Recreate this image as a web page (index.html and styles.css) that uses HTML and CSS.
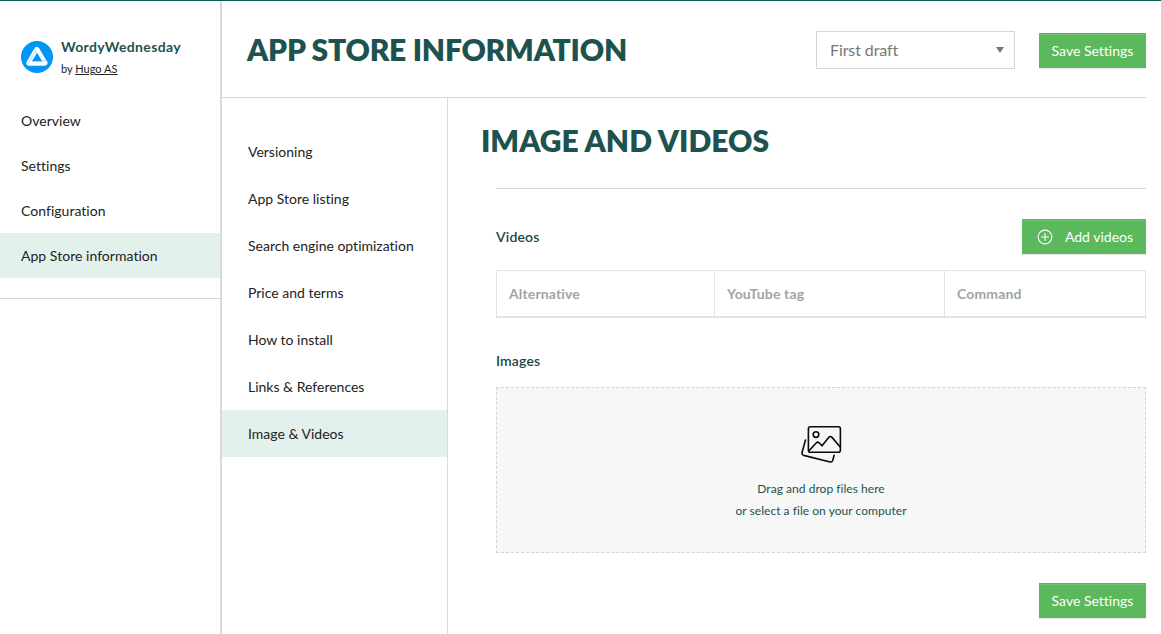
FILE: index.html
```html
<!DOCTYPE html>
<html lang="en">
<head>
<meta charset="utf-8">
<title>App Store information</title>
<link rel="stylesheet" href="styles.css">
</head>
<body>
<div class="app">
  <aside class="sidebar">
    <div class="profile">
      <svg class="logo" viewBox="0 0 32 32">
        <circle cx="16" cy="16" r="16" fill="#0095f6"/>
        <path d="M15.8 8.6 L23.8 22 H8 Z" fill="none" stroke="#fff" stroke-width="5.4" stroke-linejoin="round"/>
        <path d="M13.2 8.2 L21.4 21.4 M25.2 19.8 H11 M7.2 22.5 L14.2 10.6" fill="none" stroke="#8fcffa" stroke-width=".8"/>
        <path d="M16 11.8 L21 20.2 H11 Z" fill="#0095f6"/>
      </svg>
      <div>
        <div class="app-name">WordyWednesday</div>
        <div class="author">by <a class="author-link">Hugo AS</a></div>
      </div>
    </div>
    <nav class="main-nav">
      <a class="main-item">Overview</a>
      <a class="main-item">Settings</a>
      <a class="main-item">Configuration</a>
      <a class="main-item active">App Store information</a>
    </nav>
  </aside>
  <main class="main">
    <header class="header">
      <h1 class="title page-title">APP STORE INFORMATION</h1>
      <div class="select"><span>First draft</span><svg class="caret" viewBox="0 0 8 6"><path d="M0 0H8L4 6Z" fill="#777"/></svg></div>
      <button class="btn">Save Settings</button>
    </header>
    <div class="body">
      <nav class="sub-nav">
        <a class="sub-item">Versioning</a>
        <a class="sub-item">App Store listing</a>
        <a class="sub-item">Search engine optimization</a>
        <a class="sub-item">Price and terms</a>
        <a class="sub-item">How to install</a>
        <a class="sub-item">Links &amp; References</a>
        <a class="sub-item active">Image &amp; Videos</a>
      </nav>
      <section class="content">
        <h2 class="title">IMAGE AND VIDEOS</h2>
        <div class="panel">
          <div class="row">
            <h3 class="label">Videos</h3>
            <button class="btn btn-add">
              <svg class="plus" viewBox="0 0 16 16" fill="none" stroke="#fff" stroke-width="1.1"><circle cx="8" cy="8" r="6.9"/><path d="M8 4V12M4 8H12"/></svg>
              Add videos
            </button>
          </div>
          <div class="table">
            <div class="cell">Alternative</div>
            <div class="cell">YouTube tag</div>
            <div class="cell">Command</div>
          </div>
          <h3 class="label images-label">Images</h3>
          <div class="dropzone">
            <svg class="pictures" viewBox="0 0 42 38" fill="none" stroke="#0b0b0b" stroke-width="1.6" stroke-linecap="round" stroke-linejoin="round">
              <rect x="8.4" y="1.8" width="32" height="25.4" rx="2"/>
              <circle cx="16" cy="9.6" r="2.8"/>
              <path d="M9.2 25.5L16.2 18Q17.7 16.2 19.3 18L22 20.8L28.7 12.4Q30.4 10.6 32 12.4L40.2 22"/>
              <path d="M5.5 15L2 27.7Q1.7 29.8 3.7 30.4L30.2 37Q32.1 37.3 32.7 35.5L34.1 30.3"/>
            </svg>
            <div>Drag and drop files here</div>
            <div>or select a file on your computer</div>
          </div>
          <div class="footer"><button class="btn">Save Settings</button></div>
        </div>
      </section>
    </div>
  </main>
</div>
</body>
</html>
```
FILE: styles.css
```css
* { box-sizing: border-box; }
body {
  margin: 0;
  font-family: Lato, "Liberation Sans", sans-serif;
  font-size: 14px;
  font-variant-ligatures: none;
  color: #222;
  background: #fff;
}
h1, h2, h3 { margin: 0; }
.app {
  display: flex;
  height: 634px;
  border-top: 1px solid #0f5a55;
  overflow: hidden;
}
.sidebar {
  flex: none;
  width: 222px;
  border-right: 2px solid #d9d9d9;
}
.profile {
  display: flex;
  gap: 8px;
  height: 97px;
  padding: 37px 0 0 21px;
}
.logo { width: 32px; height: 32px; margin-top: 3px; }
.app-name {
  font-weight: 700;
  line-height: 18px;
  letter-spacing: .35px;
  color: #1d524e;
}
.author { font-size: 11px; line-height: 16px; margin-top: 5px; }
.author-link { text-decoration: underline; }
.main-nav {
  display: flex;
  flex-direction: column;
  padding-bottom: 20px;
  border-bottom: 1px solid #d5d5d5;
}
.main-item {
  height: 45px;
  padding-left: 21px;
  line-height: 46px;
  letter-spacing: .03px;
}
.active { background: #e3f1ec; }
.main {
  flex: 1;
  min-width: 0;
  display: flex;
  flex-direction: column;
  padding-right: 15px;
}
.header {
  flex: none;
  display: flex;
  align-items: flex-start;
  height: 97px;
  padding: 30px 0 0 24px;
  border-bottom: 1px solid #d5d5d5;
}
.title {
  font-size: 30px;
  line-height: 36px;
  font-weight: 800;
  color: #1d524e;
  white-space: nowrap;
}
.page-title { margin-right: auto; padding-left: 1px; letter-spacing: -.25px; }
.select {
  display: flex;
  align-items: center;
  justify-content: space-between;
  width: 199px;
  height: 38px;
  margin-right: 24px;
  padding: 0 10px 1px 13px;
  border: 1px solid #d5d5d5;
  font-size: 16px;
  letter-spacing: -.1px;
  color: #777;
}
.caret { width: 8px; height: 6px; }
.btn {
  display: flex;
  align-items: center;
  justify-content: center;
  width: 107px;
  height: 35px;
  padding: 0;
  border: 0;
  background: #5cb85c;
  box-shadow: inset 0 1px 0 #55b355, inset 0 2px 0 #74c374, 0 1px 1px rgba(0,0,0,.09);
  color: #fff;
  font: 14px Lato, "Liberation Sans", sans-serif;
  font-variant-ligatures: none;
  white-space: nowrap;
}
.header .btn { margin-top: 2px; }
.body { flex: 1; display: flex; }
.sub-nav {
  flex: none;
  display: flex;
  flex-direction: column;
  width: 226px;
  padding-top: 30px;
  border-right: 1px solid #d9d9d9;
}
.sub-item {
  height: 47px;
  padding-left: 26px;
  line-height: 47px;
}
.content { flex: 1; min-width: 0; padding: 24px 0 0 33px; }
.panel {
  margin: 30px 0 0 15px;
  padding-top: 30px;
  border-top: 1px solid #d5d5d5;
}
.row { display: flex; justify-content: space-between; align-items: center; height: 35px; }
.label { font-size: 14px; line-height: 20px; font-weight: 600; letter-spacing: .15px; color: #1d4448; }
.btn-add { width: 124px; gap: 12px; padding-left: 2px; }
.plus { width: 16px; height: 16px; }
.table {
  display: grid;
  grid-template-columns: 217px 230px 1fr;
  height: 48px;
  margin-top: 16px;
  border: 1px solid #e3e3e3;
  border-bottom-width: 2px;
}
.cell { padding-left: 12px; line-height: 45px; font-weight: 700; letter-spacing: .15px; color: #a3a3a3; }
.cell + .cell { border-left: 1px solid #e3e3e3; }
.images-label { margin-top: 33px; }
.dropzone {
  display: flex;
  flex-direction: column;
  align-items: center;
  height: 166px;
  margin-top: 16px;
  padding-top: 37px;
  border: 1px dashed #d5d5d5;
  background: #f7f7f7;
  color: #1d524e;
  font-size: 12px;
  line-height: 22px;
  letter-spacing: .04px;
}
.pictures { width: 42px; height: 38px; margin-bottom: 15px; }
.footer { display: flex; justify-content: flex-end; margin-top: 30px; }
```
